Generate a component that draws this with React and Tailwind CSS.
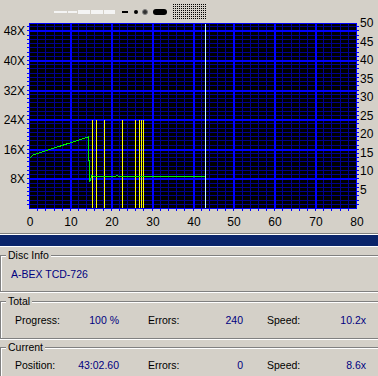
import React from "react";

const X0 = 29;
const X1 = 356;
const Y0 = 208;
const Y1 = 23;
const xPx = (v) => Math.round(X0 + (v * (X1 - X0)) / 80);
const yPx = (v) => Math.round(Y0 - (v * (Y0 - Y1)) / 50);

const vMinor = [];
for (let v = 2; v < 80; v += 2) if (v % 10 !== 0) vMinor.push(v);
const vMajor = [10, 20, 30, 40, 50, 60, 70];

const hMinor = [];
for (let m = 0; m < 7; m++) {
   for (let j = 1; j < 7; j++) {
      const v = 8 * m + (8 * j) / 7;
      if (v < 50) hMinor.push(v);
   }
}
const hMajor = [8, 16, 24, 32, 40, 48];

const yellow = [92, 96, 104, 122, 135, 139, 141, 143];
const green =
   "30,158 33,155 88,137 88,160 89,160 89,181 90,181 91,178 91,176 92,175 93,176 116,176 117,175 118,176 205,176";

const Chart = () => (
   <svg
      className="absolute inset-0"
      width="378"
      height="210"
      viewBox="0 23 378 210"
      shapeRendering="crispEdges"
   >
      <rect x={X0} y={Y1} width={X1 - X0} height={Y0 - Y1} fill="#000000" />
      {vMinor.map((v) => (
         <rect key={"vm" + v} x={xPx(v)} y={Y1} width="1" height={Y0 - Y1} fill="#000090" />
      ))}
      {hMinor.map((v) => (
         <rect key={"hm" + v} x={X0} y={yPx(v)} width={X1 - X0} height="1" fill="#000090" />
      ))}
      {vMajor.map((v) => (
         <rect key={"vM" + v} x={xPx(v)} y={Y1} width="2" height={Y0 - Y1} fill="#0000ff" />
      ))}
      {hMajor.map((v) => (
         <rect key={"hM" + v} x={X0} y={yPx(v)} width={X1 - X0} height="2" fill="#0000ff" />
      ))}
      {[...hMinor, ...hMajor].map((v) => (
         <g key={"t" + v}>
            <rect x={X0 - 2} y={yPx(v)} width="2" height="1" fill="#0000ff" />
            <rect x={X1 + 1} y={yPx(v)} width="2" height="1" fill="#0000ff" />
         </g>
      ))}
      {[...vMinor, ...vMajor].map((v) => (
         <rect key={"bt" + v} x={xPx(v)} y={Y0 + 1} width="1" height="2" fill="#0000ff" />
      ))}
      <rect x={X0} y={Y1} width={X1 - X0 + 1} height="1" fill="#0000ff" />
      <rect x={X0} y={Y0} width={X1 - X0 + 1} height="1" fill="#0000ff" />
      <rect x={X0} y={Y1} width="1" height={Y0 - Y1} fill="#0000ff" />
      <rect x={X1} y={Y1} width="1" height={Y0 - Y1} fill="#0000ff" />
      {yellow.map((x) => (
         <rect key={"y" + x} x={x} y="120" width="1" height={Y0 - 120} fill="#ffff00" />
      ))}
      <rect x="205" y={Y1 + 1} width="1" height={Y0 - Y1 - 1} fill="#c8ffff" />
      <polyline points={green} fill="none" stroke="#00f000" strokeWidth="1" />
   </svg>
);

const Legend = () => (
   <div className="flex h-[23px] items-center pl-[54px]">
      <div className="h-[2px] w-[13px] bg-[#f4f4f4]" />
      <div className="ml-[1px] h-[2px] w-[9px] bg-[#f4f4f4]" />
      <div className="ml-[1px] h-[4px] w-[12px] bg-[#f4f4f4]" />
      <div className="ml-[1px] h-[4px] w-[12px] bg-[#f4f4f4]" />
      <div className="ml-[1px] h-[4px] w-[11px] bg-[#f4f4f4]" />
      <div className="ml-[7px] h-[2px] w-[6px] bg-black" />
      <div className="ml-[6px] h-[4px] w-[4px] rounded-full bg-black" />
      <div className="ml-[4px] h-[6px] w-[6px] rounded-full border border-[#808080] bg-[#303030]" />
      <div className="ml-[5px] h-[6px] w-[14px] rounded-full bg-black" />
      <svg className="ml-[6px]" width="34" height="15">
         <defs>
            <pattern id="dots" width="2" height="2" patternUnits="userSpaceOnUse">
               <rect x="0" y="0" width="1" height="1" fill="#000" />
            </pattern>
         </defs>
         <rect width="34" height="15" fill="url(#dots)" />
      </svg>
   </div>
);

const AxisLabels = () => (
   <>
      {hMajor.map((v) => (
         <div
            key={"l" + v}
            className="absolute right-[353px] text-[12px] leading-[14px] text-black"
            style={{ top: yPx(v) - 23 - 7 + 1 }}
         >
            {v}X
         </div>
      ))}
      {[5, 10, 15, 20, 25, 30, 35, 40, 45, 50].map((v) => (
         <div
            key={"r" + v}
            className="absolute left-[360px] text-[12px] leading-[14px] text-black"
            style={{ top: yPx(v) - 23 - 7 }}
         >
            {v}
         </div>
      ))}
      {[0, 10, 20, 30, 40, 50, 60, 70, 80].map((v) => (
         <div
            key={"b" + v}
            className="absolute w-[30px] -translate-x-1/2 text-center text-[12px] leading-[14px] text-black"
            style={{ left: xPx(v) + 1, top: 222 - 23 - 7 }}
         >
            {v}
         </div>
      ))}
   </>
);

const GroupBox = ({ title, className, children }) => (
   <div
      className={
         "relative border-y border-l border-[#808080] shadow-[inset_1px_1px_0_#fff,0_1px_0_#fff] " +
         className
      }
   >
      <div className="absolute left-[5px] top-[-7px] bg-[#d4d0c8] px-[2px] leading-[13px] text-black">
         {title}
      </div>
      {children}
   </div>
);

const Row = ({ items }) => (
   <div className="flex pl-[14px] leading-[13px]">
      <div className="w-[60px] text-black">{items[0]}</div>
      <div className="w-[44px] text-right text-[#000080]">{items[1]}</div>
      <div className="ml-[29px] w-[50px] text-black">{items[2]}</div>
      <div className="w-[45px] text-right text-[#000080]">{items[3]}</div>
      <div className="ml-[24px] w-[50px] text-black">{items[4]}</div>
      <div className="w-[49px] text-right text-[#000080]">{items[5]}</div>
   </div>
);

export default function App() {
   return (
      <div className="h-[376px] w-[378px] overflow-hidden bg-[#d4d0c8] font-['Liberation_Sans',Arial,sans-serif] text-[10.5px]">
         <Legend />
         <div className="relative h-[210px]">
            <Chart />
            <AxisLabels />
         </div>
         <div className="h-px bg-[#808080]" />
         <div className="h-px bg-white" />
         <div className="h-[11px] bg-[#0a246a]" />
         <div className="h-px bg-white" />

         <GroupBox title="Disc Info" className="mt-[8px] h-[37px]">
            <div className="pl-[10px] pt-[12px] leading-[13px] text-[#000080]">
               A-BEX TCD-726
            </div>
         </GroupBox>

         <GroupBox title="Total" className="mt-[9px] h-[38px]">
            <div className="pt-[12px]">
               <Row items={["Progress:", "100 %", "Errors:", "240", "Speed:", "10.2x"]} />
            </div>
         </GroupBox>

         <GroupBox title="Current" className="mt-[8px] h-[40px]">
            <div className="pt-[11px]">
               <Row items={["Position:", "43:02.60", "Errors:", "0", "Speed:", "8.6x"]} />
            </div>
         </GroupBox>
      </div>
   );
}
